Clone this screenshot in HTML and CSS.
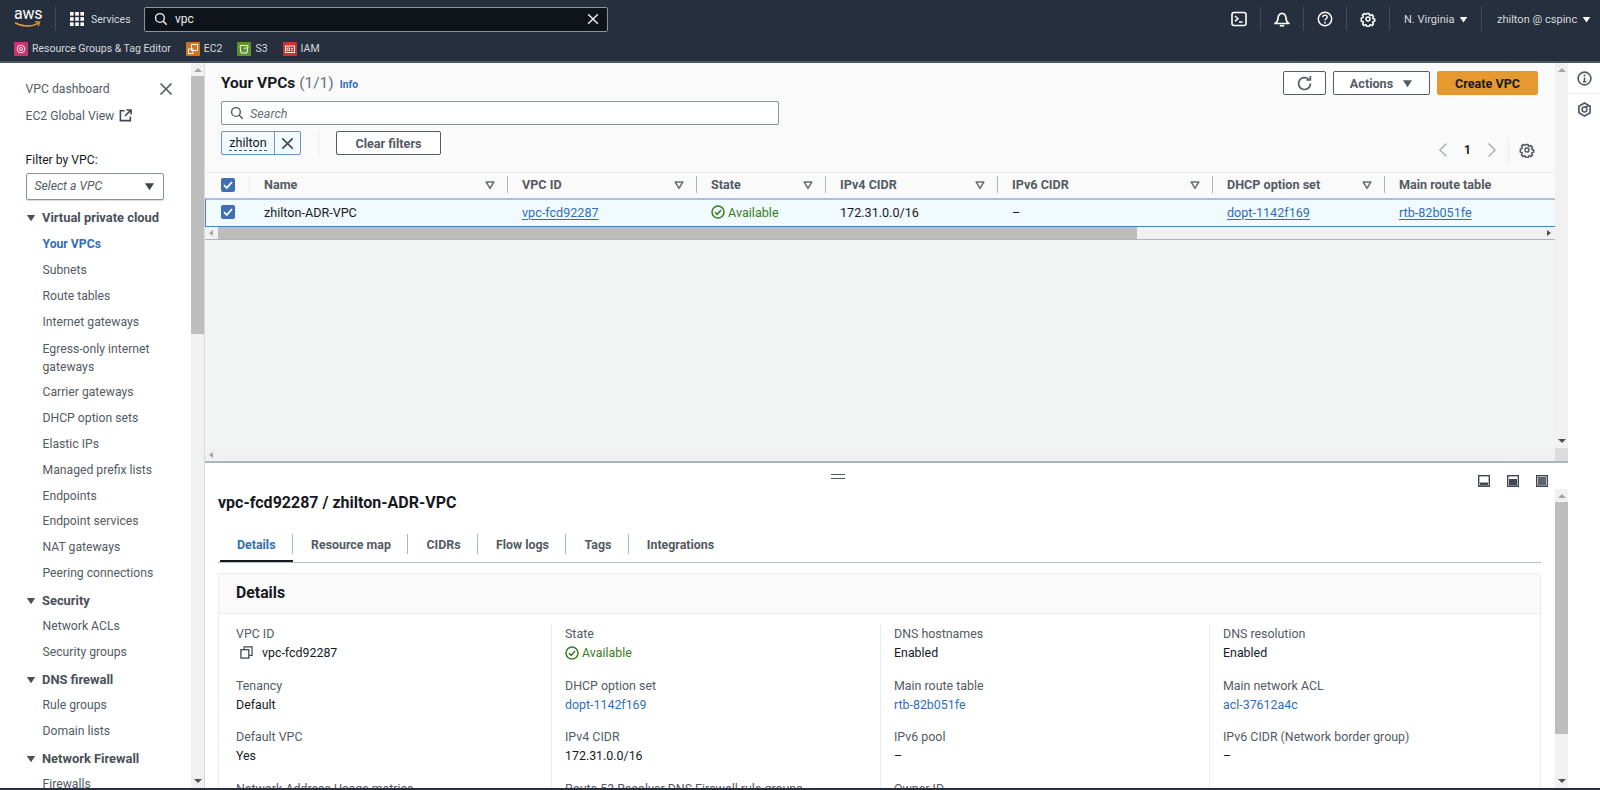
FILE: index.html
```html
<!DOCTYPE html>
<html lang="en">
<head>
<meta charset="utf-8">
<title>Your VPCs | VPC Console</title>
<link rel="stylesheet" href="styles.css">
</head>
<body>
<svg class="defs" width="0" height="0" aria-hidden="true">
  <defs>
    <symbol id="i-sort" viewBox="0 0 10 10"><path d="M1.2 2h7.6L5 8.4z" fill="none" stroke="currentColor" stroke-width="1.5" stroke-linejoin="round"/></symbol>
    <symbol id="i-caret" viewBox="0 0 12 12"><path d="M1 2.5h10L6 10z" fill="currentColor"/></symbol>
    <symbol id="i-x" viewBox="0 0 16 16"><path d="M2.5 2.5l11 11M13.5 2.5l-11 11" fill="none" stroke="currentColor" stroke-width="1.7"/></symbol>
    <symbol id="i-search" viewBox="0 0 16 16"><circle cx="6.8" cy="6.8" r="5" fill="none" stroke="currentColor" stroke-width="1.6"/><path d="M10.5 10.5l4 4" stroke="currentColor" stroke-width="1.8" fill="none"/></symbol>
    <symbol id="i-gear" viewBox="0 0 16 16"><path d="M6.6 1h2.8l.4 2 1.3.6 1.8-1.1 2 2-1.1 1.8.6 1.3 2 .4v2.8l-2 .4-.6 1.3 1.1 1.8-2 2-1.8-1.1-1.3.6-.4 2H6.6l-.4-2-1.3-.6-1.8 1.1-2-2 1.1-1.8-.6-1.3-2-.4V6.6l2-.4.6-1.3L1.1 3.1l2-2 1.8 1.1 1.3-.6z" transform="translate(1.6 1.6) scale(.8)" fill="none" stroke="currentColor" stroke-width="1.9" stroke-linejoin="round"/><circle cx="8" cy="8" r="2" fill="none" stroke="currentColor" stroke-width="1.5"/></symbol>
    <symbol id="i-check" viewBox="0 0 14 14"><circle cx="7" cy="7" r="6" fill="none" stroke="#3a7d1e" stroke-width="1.5"/><path d="M4 7.2l2.2 2.2L10 5" fill="none" stroke="#3a7d1e" stroke-width="1.6"/></symbol>
    <symbol id="i-box" viewBox="0 0 14 14"><rect width="14" height="14" rx="2" fill="#3f70b4"/><path d="M3 7.2l2.8 2.8L11 4" fill="none" stroke="#fff" stroke-width="1.8"/></symbol>
  </defs>
</svg>

<header class="topnav">
  <div class="nav-row">
    <div class="logo">
      <span class="logo-text">aws</span>
      <svg class="logo-smile" viewBox="0 0 28 8" width="27" height="8"><path d="M1 1.500c7 4.500 17 4.800 24 .8" fill="none" stroke="#e8973a" stroke-width="1.700"/><path d="M22 .6l4.500.3-1.300 4" fill="none" stroke="#e8973a" stroke-width="1.400"/></svg>
    </div>
    <span class="nav-div nav-div-logo"></span>
    <svg class="grid-icon" viewBox="0 0 14 14" width="14" height="14"><g fill="#fff"><rect width="3.600" height="3.600"/><rect x="5.200" width="3.600" height="3.600"/><rect x="10.400" width="3.600" height="3.600"/><rect y="5.200" width="3.600" height="3.600"/><rect x="5.200" y="5.200" width="3.600" height="3.600"/><rect x="10.400" y="5.200" width="3.600" height="3.600"/><rect y="10.400" width="3.600" height="3.600"/><rect x="5.200" y="10.400" width="3.600" height="3.600"/><rect x="10.400" y="10.400" width="3.600" height="3.600"/></g></svg>
    <span class="services">Services</span>
    <div class="nav-search">
      <svg class="icon-14" width="14" height="14"><use href="#i-search"/></svg>
      <span class="nav-search-text">vpc</span>
      <svg class="icon-14 nav-search-x" width="14" height="14"><use href="#i-x"/></svg>
    </div>
    <div class="nav-right">
      <span class="nav-item nav-first"><svg viewBox="0 0 16 16" width="16" height="16"><rect x="1" y="1.500" width="14" height="13" rx="2" fill="none" stroke="#fff" stroke-width="1.600"/><path d="M4 5l3 2.700L4 10.400M8 11h3.500" fill="none" stroke="#fff" stroke-width="1.500"/></svg></span>
      <span class="nav-item"><svg viewBox="0 0 16 16" width="16" height="16"><path d="M1 12.500c2.600-1.200 2.800-2.500 3-5.300.2-2.900 2-4.900 4-4.900s3.800 2 4 4.900c.2 2.800.4 4.100 3 5.300z" fill="none" stroke="#fff" stroke-width="1.700" stroke-linejoin="round"/><path d="M5.800 14.700h4.400" stroke="#fff" stroke-width="1.700"/></svg></span>
      <span class="nav-item"><svg viewBox="0 0 16 16" width="16" height="16"><circle cx="8" cy="8" r="6.700" fill="none" stroke="#fff" stroke-width="1.500"/><path d="M5.800 6.200c0-1.300 1-2.100 2.200-2.100s2.200.8 2.200 2c0 1.700-2.200 1.600-2.200 3.500" fill="none" stroke="#fff" stroke-width="1.400"/><circle cx="8" cy="11.700" r=".9" fill="#fff"/></svg></span>
      <span class="nav-item"><svg class="nav-gear" width="16" height="16"><use href="#i-gear"/></svg></span>
      <span class="nav-item nav-region">N. Virginia<svg class="nav-caret" width="9" height="9"><use href="#i-caret"/></svg></span>
      <span class="nav-item nav-user">zhilton @ cspinc<svg class="nav-caret" width="9" height="9"><use href="#i-caret"/></svg></span>
    </div>
  </div>
  <div class="fav-row">
    <span class="fav"><span class="fav-icon fav-pink"><svg viewBox="0 0 14 14" width="14" height="14"><circle cx="7" cy="7" r="3.800" fill="none" stroke="#fff" stroke-width=".9"/><circle cx="7" cy="7" r="1.500" fill="none" stroke="#fff" stroke-width=".9"/></svg></span>Resource Groups &amp; Tag Editor</span>
    <span class="fav"><span class="fav-icon fav-orange"><svg viewBox="0 0 14 14" width="14" height="14"><rect x="5.500" y="2.500" width="6" height="6" fill="none" stroke="#fff" stroke-width=".9"/><rect x="2.500" y="7" width="4.500" height="4.500" fill="none" stroke="#fff" stroke-width=".9"/></svg></span>EC2</span>
    <span class="fav"><span class="fav-icon fav-green"><svg viewBox="0 0 14 14" width="14" height="14"><path d="M3 3.500h8l-1 7.500H4zM7 6.500l4-1" fill="none" stroke="#fff" stroke-width=".9"/></svg></span>S3</span>
    <span class="fav"><span class="fav-icon fav-red"><svg viewBox="0 0 14 14" width="14" height="14"><rect x="2.500" y="4" width="9" height="6.500" fill="none" stroke="#fff" stroke-width=".9"/><path d="M4 6h2.500v2.500H4zM8 6.500h2M8 8.300h2" fill="none" stroke="#fff" stroke-width=".8"/></svg></span>IAM</span>
  </div>
</header>

<div class="app">
  <aside class="sidebar">
    <nav class="side-nav">
      <div class="side-top">
        <div class="side-link side-first">VPC dashboard</div>
        <svg class="side-close" width="16" height="16"><use href="#i-x"/></svg>
      </div>
      <div class="side-link side-ext">EC2 Global View
        <svg viewBox="0 0 14 14" width="13" height="13"><path d="M6 1.800H1.500v10.700h10.700V8M8 1h5v5M13 1L6.500 7.500" fill="none" stroke="#414750" stroke-width="1.700"/></svg>
      </div>
      <div class="filter-label">Filter by VPC:</div>
      <div class="filter-select"><span>Select a VPC</span><svg class="select-caret" width="11" height="11"><use href="#i-caret"/></svg></div>
      <div class="side-section side-section-first"><svg width="10" height="10"><use href="#i-caret"/></svg>Virtual private cloud</div>
      <div class="side-item side-active">Your VPCs</div>
      <div class="side-item">Subnets</div>
      <div class="side-item">Route tables</div>
      <div class="side-item">Internet gateways</div>
      <div class="side-item side-wrap">Egress-only internet gateways</div>
      <div class="side-item">Carrier gateways</div>
      <div class="side-item">DHCP option sets</div>
      <div class="side-item">Elastic IPs</div>
      <div class="side-item">Managed prefix lists</div>
      <div class="side-item">Endpoints</div>
      <div class="side-item">Endpoint services</div>
      <div class="side-item">NAT gateways</div>
      <div class="side-item">Peering connections</div>
      <div class="side-section"><svg width="10" height="10"><use href="#i-caret"/></svg>Security</div>
      <div class="side-item">Network ACLs</div>
      <div class="side-item">Security groups</div>
      <div class="side-section"><svg width="10" height="10"><use href="#i-caret"/></svg>DNS firewall</div>
      <div class="side-item">Rule groups</div>
      <div class="side-item">Domain lists</div>
      <div class="side-section"><svg width="10" height="10"><use href="#i-caret"/></svg>Network Firewall</div>
      <div class="side-item">Firewalls</div>
    </nav>
    <div class="vbar vbar-side">
      <span class="arrow-up"></span>
      <span class="vthumb vthumb-side"></span>
      <span class="vspace"></span>
      <span class="arrow-down"></span>
    </div>
  </aside>

  <main class="content">
    <section class="top-pane">
      <div class="top-main">
        <div class="toolbar">
          <div class="title-row">
            <h1 class="page-title">Your VPCs <span class="count">(1/1)</span></h1>
            <a class="info">Info</a>
            <div class="actions">
              <button class="btn btn-icon"><svg viewBox="0 0 16 16" width="17" height="17"><path d="M13.600 8a5.600 5.600 0 1 1-1.700-4" fill="none" stroke="#545b64" stroke-width="1.600"/><path d="M13.500 1v3.700H9.800" fill="none" stroke="#545b64" stroke-width="1.600"/></svg></button>
              <button class="btn btn-actions">Actions<svg width="11" height="11"><use href="#i-caret"/></svg></button>
              <button class="btn btn-primary">Create VPC</button>
            </div>
          </div>
          <div class="search-box">
            <svg class="search-icon" width="14" height="14"><use href="#i-search"/></svg>
            <span>Search</span>
          </div>
          <div class="chip-row">
            <div class="chip"><span class="chip-text"><span class="chip-label">zhilton</span></span><span class="chip-x"><svg width="15" height="15"><use href="#i-x"/></svg></span></div>
            <span class="chip-div"></span>
            <button class="btn btn-clear">Clear filters</button>
            <div class="pager">
              <svg viewBox="0 0 10 16" width="10" height="16"><path d="M8.500 1.500L2 8l6.500 6.500" fill="none" stroke="#aab7b8" stroke-width="1.600"/></svg>
              <span class="pager-num">1</span>
              <svg viewBox="0 0 10 16" width="10" height="16"><path d="M1.500 1.500L8 8l-6.500 6.500" fill="none" stroke="#aab7b8" stroke-width="1.600"/></svg>
              <span class="pager-div"></span>
              <svg class="pager-gear" width="16" height="16"><use href="#i-gear"/></svg>
            </div>
          </div>
        </div>

        <div class="table-wrap">
          <div class="thead">
            <div class="th th-check"><svg width="14" height="14"><use href="#i-box"/></svg></div>
            <div class="th">Name<svg class="sort" width="10" height="10"><use href="#i-sort"/></svg></div>
            <div class="th">VPC ID<svg class="sort" width="10" height="10"><use href="#i-sort"/></svg></div>
            <div class="th">State<svg class="sort" width="10" height="10"><use href="#i-sort"/></svg></div>
            <div class="th">IPv4 CIDR<svg class="sort" width="10" height="10"><use href="#i-sort"/></svg></div>
            <div class="th">IPv6 CIDR<svg class="sort" width="10" height="10"><use href="#i-sort"/></svg></div>
            <div class="th">DHCP option set<svg class="sort" width="10" height="10"><use href="#i-sort"/></svg></div>
            <div class="th th-last">Main route table<svg class="sort" width="10" height="10"><use href="#i-sort"/></svg></div>
          </div>
          <div class="tbody-row">
            <div class="td td-check"><svg width="14" height="14"><use href="#i-box"/></svg></div>
            <div class="td">zhilton-ADR-VPC</div>
            <div class="td"><a class="link-u">vpc-fcd92287</a></div>
            <div class="td td-state"><svg width="14" height="14"><use href="#i-check"/></svg>Available</div>
            <div class="td">172.31.0.0/16</div>
            <div class="td">–</div>
            <div class="td"><a class="link-u">dopt-1142f169</a></div>
            <div class="td"><a class="link-u">rtb-82b051fe</a></div>
          </div>
          <div class="hbar">
            <span class="arrow-left"></span>
            <span class="hthumb"></span>
            <span class="hspace"></span>
            <span class="arrow-right"></span>
          </div>
        </div>
        <div class="table-empty"></div>
        <div class="pane-hbar"><span class="arrow-left"></span></div>
      </div>
      <div class="vbar vbar-top">
        <span class="arrow-up"></span>
        <span class="vspace"></span>
        <span class="arrow-down"></span>
        <span class="corner"></span>
      </div>
    </section>

    <section class="bottom-pane">
      <div class="split-head">
        <span class="handle"></span>
        <div class="split-icons">
          <svg viewBox="0 0 12 12" width="12" height="12"><rect x=".7" y=".7" width="10.600" height="10.600" fill="none" stroke="#414750" stroke-width="1.400"/><rect x="2" y="7.500" width="8" height="3" fill="#414750"/></svg>
          <svg viewBox="0 0 12 12" width="12" height="12"><rect x=".7" y=".7" width="10.600" height="10.600" fill="none" stroke="#414750" stroke-width="1.400"/><rect x="2" y="4" width="8" height="6.500" fill="#414750"/></svg>
          <svg viewBox="0 0 12 12" width="12" height="12"><rect x=".7" y=".7" width="10.600" height="10.600" fill="none" stroke="#414750" stroke-width="1.400"/><rect x="2" y="2" width="8" height="8.500" fill="#5f666e"/></svg>
        </div>
      </div>
      <div class="split-body">
        <div class="detail">
          <h2 class="detail-title">vpc-fcd92287 / zhilton-ADR-VPC</h2>
          <div class="tabs">
            <span class="tab tab-active">Details</span>
            <span class="tab">Resource map</span>
            <span class="tab">CIDRs</span>
            <span class="tab">Flow logs</span>
            <span class="tab">Tags</span>
            <span class="tab tab-last">Integrations</span>
          </div>
          <div class="card">
            <div class="card-head">Details</div>
            <div class="card-grid">
              <div class="col">
                <div class="kv"><div class="k">VPC ID</div><div class="v v-copy"><svg viewBox="0 0 14 14" width="13" height="13"><rect x="1" y="4" width="8.500" height="9" fill="none" stroke="#414750" stroke-width="1.400"/><path d="M4.500 3.500V1h8.500v9h-3" fill="none" stroke="#414750" stroke-width="1.300"/></svg>vpc-fcd92287</div></div>
                <div class="kv"><div class="k">Tenancy</div><div class="v">Default</div></div>
                <div class="kv"><div class="k">Default VPC</div><div class="v">Yes</div></div>
                <div class="kv"><div class="k">Network Address Usage metrics</div></div>
              </div>
              <div class="col">
                <div class="kv"><div class="k">State</div><div class="v v-state"><svg width="14" height="14"><use href="#i-check"/></svg>Available</div></div>
                <div class="kv"><div class="k">DHCP option set</div><div class="v v-link">dopt-1142f169</div></div>
                <div class="kv"><div class="k">IPv4 CIDR</div><div class="v">172.31.0.0/16</div></div>
                <div class="kv"><div class="k">Route 53 Resolver DNS Firewall rule groups</div></div>
              </div>
              <div class="col">
                <div class="kv"><div class="k">DNS hostnames</div><div class="v">Enabled</div></div>
                <div class="kv"><div class="k">Main route table</div><div class="v v-link">rtb-82b051fe</div></div>
                <div class="kv"><div class="k">IPv6 pool</div><div class="v">–</div></div>
                <div class="kv"><div class="k">Owner ID</div></div>
              </div>
              <div class="col">
                <div class="kv"><div class="k">DNS resolution</div><div class="v">Enabled</div></div>
                <div class="kv"><div class="k">Main network ACL</div><div class="v v-link">acl-37612a4c</div></div>
                <div class="kv"><div class="k">IPv6 CIDR (Network border group)</div><div class="v">–</div></div>
              </div>
            </div>
          </div>
        </div>
        <div class="vbar vbar-detail">
          <span class="arrow-up"></span>
          <span class="vthumb vthumb-detail"></span>
          <span class="vspace"></span>
          <span class="arrow-down"></span>
        </div>
      </div>
    </section>
  </main>

  <aside class="rail">
    <div class="rail-item rail-info"><svg viewBox="0 0 16 16" width="15" height="15"><circle cx="8" cy="8" r="6.800" fill="none" stroke="#545b64" stroke-width="1.800"/><path d="M8 7v4.500M6.300 11.500h3.400" stroke="#545b64" stroke-width="1.700"/><circle cx="8" cy="4.700" r="1.100" fill="#545b64"/></svg></div>
    <div class="rail-item"><svg viewBox="0 0 16 16" width="15" height="15"><path d="M8 1l6 3.500v7L8 15l-6-3.500v-7z" fill="none" stroke="#545b64" stroke-width="1.800"/><circle cx="8" cy="8" r="2.600" fill="none" stroke="#545b64" stroke-width="1.600"/><path d="M8 5.500l5-1.500" stroke="#545b64" stroke-width="1.600"/></svg></div>
  </aside>
</div>
<div class="bottom-strip"></div>
</body>
</html>
```

FILE: styles.css
```css
* { box-sizing: border-box; }
html, body { margin: 0; height: 790px; overflow: hidden; }
body {
  display: flex;
  flex-direction: column;
  font-family: Roboto, "Noto Sans", sans-serif;
  font-size: 12.6px;
  color: #16191f;
  background: #fff;
}
.defs { position: absolute; }
svg { display: block; flex: none; }
h1, h2 { margin: 0; }

/* Top navigation */
.topnav { height: 63px; flex: none; background: #252f3e; border-bottom: 2px solid #4b5563; color: #eaeded; }
.nav-row { height: 38px; display: flex; align-items: center; padding-left: 14px; }
.logo { width: 27px; height: 26px; position: relative; color: #fff; }
.logo-text { display: block; font-size: 16px; line-height: 16px; letter-spacing: -.3px; text-align: center; }
.logo-smile { margin-top: -1px; }
.nav-div { width: 1px; height: 24px; background: #414b5a; }
.nav-div-logo { margin-left: 14px; }
.grid-icon { margin-left: 14px; }
.services { width: 41px; margin-left: 7px; font-size: 10.500px; color: #d5dbdb; }
.nav-search {
  margin-left: 12px; width: 464px; height: 25px; display: flex; align-items: center; gap: 7px;
  padding: 0 7px 0 9px; background: #0f141a; border: 1px solid #879596; border-radius: 2px; color: #eaeded;
}
.nav-search-text { font-size: 12px; }
.nav-search-x { margin-left: auto; }
.nav-right { margin-left: auto; display: flex; align-items: center; height: 24px; color: #d5dbdb; font-size: 11px; }
.nav-item { width: 43px; height: 24px; display: flex; align-items: center; justify-content: center; border-left: 1px solid #414b5a; }
.nav-first { border-left: 0; }
.nav-gear { color: #fff; }
.nav-caret { color: #fff; margin-left: 5px; }
.nav-region { width: 92px; padding-left: 14px; justify-content: flex-start; }
.nav-user { width: 119px; padding-left: 15px; justify-content: flex-start; }
.fav-row { height: 21px; display: flex; align-items: center; padding-left: 14px; gap: 15px; font-size: 10.500px; color: #d5dbdb; }
.fav { display: flex; align-items: center; gap: 4px; }
.fav-icon { width: 14px; height: 14px; border-radius: 1px; }
.fav-pink { background: #c9366f; }
.fav-orange { background: #cf7421; }
.fav-green { background: #5b9330; }
.fav-red { background: #c8352f; }

/* Frame */
.app { flex: 1; min-height: 0; display: flex; }
.bottom-strip { height: 2px; flex: none; background: #252f3e; }

/* Scrollbars */
.vbar { width: 13px; flex: none; display: flex; flex-direction: column; align-items: center; background: #f1f1f1; }
.vthumb { width: 100%; flex: none; background: #bdbdbd; }
.vspace, .hspace { flex: 1; }
.arrow-up, .arrow-down, .arrow-left, .arrow-right { width: 0; height: 0; flex: none; border-style: solid; border-color: transparent; }
.arrow-up { margin: 5px 0 4px; border-width: 0 4px 4px; border-bottom-color: #a3a3a3; }
.arrow-down { margin: 4px 0 5px; border-width: 4px 4px 0; border-top-color: #505050; }
.arrow-left { border-width: 3.500px 4px 3.500px 0; border-right-color: #a3a3a3; }
.arrow-right { border-width: 3.500px 0 3.500px 4px; border-left-color: #505050; }
.vthumb-side { height: 258px; }

/* Sidebar */
.sidebar { width: 205px; flex: none; display: flex; border-right: 1px solid #d5dbdb; }
.side-nav { flex: 1; min-width: 0; overflow: hidden; padding: 0 0 0 25.500px; color: #545b64; font-size: 12.200px; }
.side-top { display: flex; align-items: center; justify-content: space-between; height: 26px; margin-top: 13px; padding-right: 17px; }
.side-ext { display: flex; align-items: center; gap: 5px; height: 26px; margin-top: 0.500px; }
.filter-label { margin-top: 18px; height: 26px; line-height: 26px; color: #16191f; }
.filter-select {
  width: 138px; height: 27px; margin-top: 0; display: flex; align-items: center; justify-content: space-between;
  padding: 0 8px; border: 1px solid #879596; border-radius: 2px; font-style: italic; color: #545b64; box-shadow: 0 1px 1px rgba(0,0,0,.15);
}
.select-caret { color: #414750; }
.side-section { display: flex; align-items: center; gap: 6.500px; height: 26.500px; margin-top: 0.500px; font-size: 12.900px; font-weight: 700; color: #4a5059; line-height: 26px; }
.side-section-first { margin-top: 5px; height: 27.500px; }
.side-item { padding-left: 17px; padding-right: 14px; height: 25.950px; line-height: 25.950px; }
.side-active { color: #2f6fb7; font-weight: 700; }
.side-wrap { height: 44px; line-height: 18.500px; padding-top: 4px; }

/* Content */
.content { flex: 1; min-width: 0; display: flex; flex-direction: column; }
.top-pane { height: 400px; flex: none; display: flex; border-bottom: 2px solid #aab7b8; background: #f2f3f3; }
.top-main { flex: 1; min-width: 0; display: flex; flex-direction: column; }
.toolbar { height: 109px; flex: none; background: #fafafa; padding: 8px 17px 0 16px; display: flex; flex-direction: column; gap: 6px; }
.title-row { display: flex; align-items: center; height: 24px; }
.page-title { font-size: 15.500px; font-weight: 700; line-height: 24px; }
.count { font-weight: 400; color: #687078; }
.info { margin-left: 6px; margin-top: 2px; font-size: 10.300px; font-weight: 700; color: #2f6fb7; }
.actions { margin-left: auto; display: flex; gap: 7px; }
.btn {
  height: 24px; font: 700 12.600px Roboto, "Noto Sans", sans-serif; color: #545b64; background: #fff;
  border: 1px solid #545b64; border-radius: 2px; display: flex; align-items: center; justify-content: center; padding: 0;
}
.btn-icon { width: 43px; }
.btn-actions { width: 97px; gap: 9px; }
.btn-primary { width: 101px; background: #e6992f; border-color: #e6992f; color: #16191f; }
.search-box {
  width: 558px; height: 24px; display: flex; align-items: center; gap: 6px; padding: 0 8px;
  background: #fff; border: 1px solid #879596; border-radius: 2px; font-style: italic; color: #687078;
}
.search-icon { color: #545b64; }
.chip-row { display: flex; height: 24px; align-items: center; }
.chip { display: flex; height: 24px; width: 80px; border: 1px solid #6d94c8; border-radius: 2px; background: #f1faff; }
.chip-text { flex: 1; display: flex; align-items: center; justify-content: center; border-right: 1px solid #6d94c8; }
.chip-label { border-bottom: 1px dashed #545b64; line-height: 15px; }
.chip-x { width: 25px; display: flex; align-items: center; justify-content: center; color: #414750; }
.chip-div { width: 1px; height: 24px; margin-left: 17px; background: #eaeded; }
.btn-clear { width: 105px; margin-left: 17px; }
.pager { margin-left: auto; margin-top: 14px; display: flex; align-items: center; color: #545b64; }
.pager-num { margin: 0 16px; font-weight: 700; color: #16191f; font-size: 12px; }
.pager-div { width: 1px; height: 24px; margin: 0 10px 0 11px; background: #eaeded; }
.pager-gear { margin-right: 3px; }

/* Table */
.table-wrap { flex: none; overflow: hidden; }
.thead, .tbody-row {
  display: grid;
  grid-template-columns: 45px 258px 189px 129px 172px 215px 172px 200px;
}
.thead { height: 26px; background: #fafafa; border-top: 1px solid #eaeded; font-weight: 700; color: #545b64; }
.th { position: relative; display: flex; align-items: center; padding-left: 14px; padding-bottom: 2px; border-right: 2px solid transparent; }
.th::after { content: ""; position: absolute; right: -2px; top: 3px; bottom: 5px; width: 1.500px; background: #aab7b8; }
.th-check { padding-left: 16px; }
.th-check::after { background: #eaeded; width: 1px; }
.th-last::after { display: none; }
.sort { margin-left: auto; margin-right: 11px; color: #687078; }
.tbody-row { height: 29px; padding-bottom: 2px; background: #f1faff; border-top: 2px solid #a5c0e2; border-bottom: 1px solid #4f7fb9; border-left: 1px solid #4f7fb9; align-items: center; grid-template-columns: 44px 258px 189px 129px 172px 215px 172px 200px; }
.td { padding-left: 14px; white-space: nowrap; }
.td-check { padding-left: 15px; }
.td-state { display: flex; align-items: center; gap: 3px; color: #3a7d1e; }
.link-u { color: #2f6fb7; text-decoration: underline; text-underline-offset: 2px; }
.hbar { height: 13px; display: flex; align-items: center; padding: 0 4px; background: #f1f1f1; border-bottom: 1px solid #aab7b8; }
.hthumb { width: 919px; height: 12px; margin-left: 5px; background: #bdbdbd; }
.table-empty { flex: 1; }
.pane-hbar { height: 13px; flex: none; display: flex; align-items: center; padding: 0 4px; background: #f1f1f1; }
.vbar-top { height: 398px; }
.corner { width: 100%; height: 13px; flex: none; background: #dcdcdc; }

/* Lower split panel */
.bottom-pane { flex: 1; min-height: 0; display: flex; flex-direction: column; background: #fff; }
.split-head { height: 26px; flex: none; display: flex; align-items: center; padding-left: 626px; position: relative; }
.handle { width: 14px; height: 5px; margin-top: 1px; border-top: 1px solid #545b64; border-bottom: 1px solid #545b64; }
.split-icons { position: absolute; right: 20px; top: 12px; display: flex; gap: 17px; }
.split-body { flex: 1; min-height: 0; display: flex; }
.detail { flex: 1; min-width: 0; overflow: hidden; padding: 1px 14px 0 13px; font-size: 12.400px; }
.detail-title { font-size: 16px; font-weight: 700; line-height: 26px; height: 26px; }
.tabs { display: flex; height: 33px; margin-top: 14px; border-bottom: 1px solid #b3c0c0; font-weight: 700; color: #545b64; }
.tab { height: 32px; padding: 5px 17.500px 0 18px; position: relative; line-height: 20px; }
.tab::after { content: ""; position: absolute; right: 0; top: 4px; height: 20px; width: 1px; background: #aab7b8; }
.tab-last::after { display: none; }
.tab-active { color: #2f6fb7; padding-left: 17px; margin-left: 2px; border-bottom: 2px solid #16191f; }
.card { margin-top: 10px; border: 1px solid #eaeded; border-radius: 2px; box-shadow: 0 1px 1px rgba(0,28,36,.1); }
.card-head { height: 40px; padding-left: 17px; background: #fafafa; border-bottom: 1px solid #eaeded; font-size: 15.800px; font-weight: 700; line-height: 38px; }
.card-grid { display: grid; grid-template-columns: 332px 329px 329px 1fr; padding-top: 10px; }
.col { padding-left: 13px; border-left: 1px solid #eaeded; }
.col:first-child { padding-left: 17px; border-left: 0; }
.kv { height: 51.700px; }
.k { color: #545b64; line-height: 19px; white-space: nowrap; }
.v { line-height: 19px; }
.v-copy { display: flex; align-items: center; gap: 9px; padding-left: 4px; }
.v-state { display: flex; align-items: center; gap: 3px; color: #3a7d1e; }
.v-link { color: #2f6fb7; }
.vbar-detail { background: #f1f1f1; }
.vthumb-detail { height: 232px; }

/* Right rail */
.rail { width: 32px; flex: none; background: #fff; }
.rail-item { height: 31px; display: flex; align-items: center; justify-content: center; }
.rail-info { border-bottom: 1px solid #eaeded; }
```
